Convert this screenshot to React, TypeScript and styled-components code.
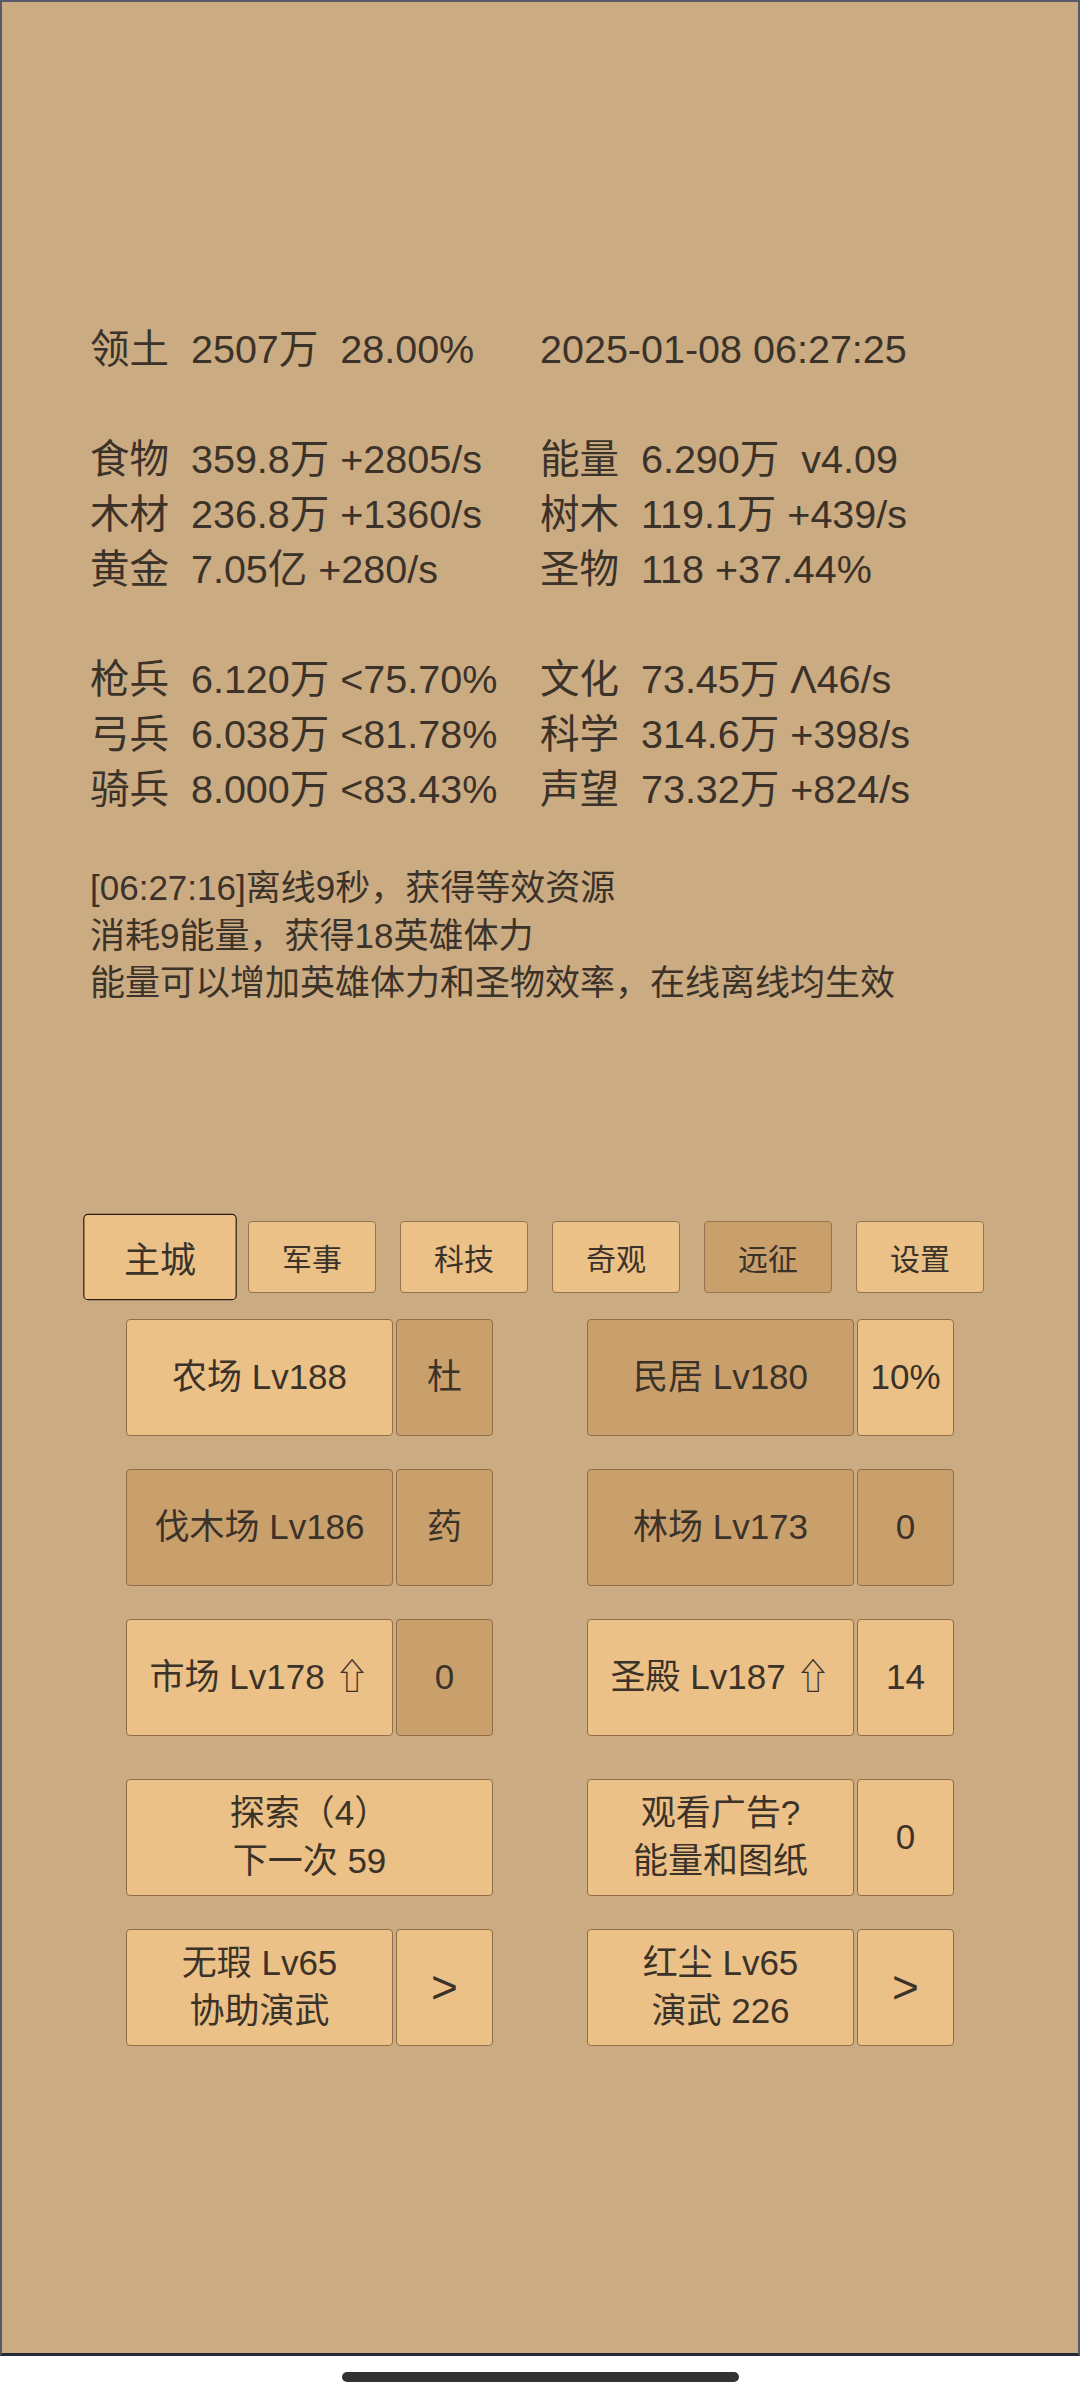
import styled, { createGlobalStyle } from 'styled-components';

const GlobalStyle = createGlobalStyle`
  html, body {
    margin: 0;
    padding: 0;
    background: #ffffff;
  }
  body {
    font-family: "Liberation Sans", "Noto Sans CJK SC", "DejaVu Sans", sans-serif;
    color: #3b3229;
  }
`;

type Tone = 'light' | 'dark';

type StatLine = [string, string] | null;

const statLines: StatLine[] = [
  ['领土  2507万  28.00%', '2025-01-08 06:27:25'],
  null,
  ['食物  359.8万 +2805/s', '能量  6.290万  v4.09'],
  ['木材  236.8万 +1360/s', '树木  119.1万 +439/s'],
  ['黄金  7.05亿 +280/s', '圣物  118 +37.44%'],
  null,
  ['枪兵  6.120万 <75.70%', '文化  73.45万 Λ46/s'],
  ['弓兵  6.038万 <81.78%', '科学  314.6万 +398/s'],
  ['骑兵  8.000万 <83.43%', '声望  73.32万 +824/s'],
];

const logLines = [
  '[06:27:16]离线9秒，获得等效资源',
  '消耗9能量，获得18英雄体力',
  '能量可以增加英雄体力和圣物效率，在线离线均生效',
];

const tabs: { name: string; tone: Tone; active?: boolean }[] = [
  { name: '主城', tone: 'light', active: true },
  { name: '军事', tone: 'light' },
  { name: '科技', tone: 'light' },
  { name: '奇观', tone: 'light' },
  { name: '远征', tone: 'dark' },
  { name: '设置', tone: 'light' },
];

type Cell = { text: string[]; tone: Tone; side?: { text: string; tone: Tone; big?: boolean } };

const buildingRows: { cells: Cell[]; extraTop?: boolean }[] = [
  {
    cells: [
      { text: ['农场 Lv188'], tone: 'light', side: { text: '杜', tone: 'dark' } },
      { text: ['民居 Lv180'], tone: 'dark', side: { text: '10%', tone: 'light' } },
    ],
  },
  {
    cells: [
      { text: ['伐木场 Lv186'], tone: 'dark', side: { text: '药', tone: 'dark' } },
      { text: ['林场 Lv173'], tone: 'dark', side: { text: '0', tone: 'dark' } },
    ],
  },
  {
    cells: [
      { text: ['市场 Lv178 ⇧'], tone: 'light', side: { text: '0', tone: 'dark' } },
      { text: ['圣殿 Lv187 ⇧'], tone: 'light', side: { text: '14', tone: 'light' } },
    ],
  },
  {
    extraTop: true,
    cells: [
      { text: ['探索（4）', '下一次 59'], tone: 'light' },
      { text: ['观看广告?', '能量和图纸'], tone: 'light', side: { text: '0', tone: 'light' } },
    ],
  },
  {
    cells: [
      { text: ['无瑕 Lv65', '协助演武'], tone: 'light', side: { text: '>', tone: 'light', big: true } },
      { text: ['红尘 Lv65', '演武 226'], tone: 'light', side: { text: '>', tone: 'light', big: true } },
    ],
  },
];

const Screen = styled.div`
  width: 1080px;
  height: 2400px;
  display: flex;
  flex-direction: column;
`;

const Panel = styled.div`
  height: 2356px;
  box-sizing: border-box;
  background: #cbab82;
  border: 2px solid #55596a;
  border-bottom: 3px solid #262a38;
  display: flex;
  flex-direction: column;
`;

const Stats = styled.div`
  margin-top: 320px;
  padding-left: 88px;
  font-size: 39.5px;
  line-height: 55px;
`;

const StatRow = styled.div`
  display: grid;
  grid-template-columns: 450px auto;
  height: 55px;
  white-space: pre;
`;

const Log = styled.div`
  margin-top: 47px;
  padding-left: 88px;
  font-size: 35px;
  line-height: 47.5px;
`;

const TabBar = styled.div`
  margin-top: 214px;
  display: flex;
  justify-content: center;
  gap: 24px;
`;

const Tab = styled.div<{ $tone: Tone; $active?: boolean }>`
  width: 128px;
  height: 72px;
  box-sizing: border-box;
  display: flex;
  align-items: center;
  justify-content: center;
  font-size: 30px;
  border-radius: 4px;
  border: 1px solid ${({ $active }) => ($active ? '#2c1e10' : '#95754f')};
  background: ${({ $tone }) => ($tone === 'light' ? '#ebc187' : '#c9a06c')};
  transform: ${({ $active }) => ($active ? 'scale(1.2)' : 'none')};
`;

const Buildings = styled.div`
  margin-top: 26px;
  display: flex;
  flex-direction: column;
`;

const BuildingRow = styled.div<{ $extraTop?: boolean }>`
  display: flex;
  justify-content: center;
  gap: 94px;
  margin-top: ${({ $extraTop }) => ($extraTop ? '43px' : '33px')};
  &:first-child {
    margin-top: 0;
  }
`;

const Pair = styled.div`
  width: 367px;
  display: flex;
  gap: 3px;
`;

const Btn = styled.div<{ $tone: Tone; $big?: boolean }>`
  height: 117px;
  box-sizing: border-box;
  display: flex;
  flex-direction: column;
  align-items: center;
  justify-content: center;
  text-align: center;
  font-size: ${({ $big }) => ($big ? '46px' : '35px')};
  line-height: 48px;
  border-radius: 4px;
  border: 1px solid #8f6e48;
  background: ${({ $tone }) => ($tone === 'light' ? '#ebc187' : '#c9a06c')};
  white-space: pre;
`;

const MainBtn = styled(Btn)`
  flex: 1;
`;

const SideBtn = styled(Btn)`
  width: 97px;
  flex: none;
`;

const HomeArea = styled.div`
  flex: 1;
  display: flex;
  justify-content: center;
  padding-top: 16px;
`;

const HomeBar = styled.div`
  width: 397px;
  height: 10px;
  border-radius: 5px;
  background: #333333;
`;

export default function App() {
  return (
    <Screen>
      <GlobalStyle />
      <Panel>
        <Stats>
          {statLines.map((line, i) => (
            <StatRow key={i}>
              {line ? (
                <>
                  <span>{line[0]}</span>
                  <span>{line[1]}</span>
                </>
              ) : null}
            </StatRow>
          ))}
        </Stats>
        <Log>
          {logLines.map((l) => (
            <div key={l}>{l}</div>
          ))}
        </Log>
        <TabBar>
          {tabs.map((t) => (
            <Tab key={t.name} $tone={t.tone} $active={t.active}>
              {t.name}
            </Tab>
          ))}
        </TabBar>
        <Buildings>
          {buildingRows.map((row, i) => (
            <BuildingRow key={i} $extraTop={row.extraTop}>
              {row.cells.map((cell, j) => (
                <Pair key={j}>
                  <MainBtn $tone={cell.tone}>
                    {cell.text.map((t) => (
                      <span key={t}>{t}</span>
                    ))}
                  </MainBtn>
                  {cell.side && (
                    <SideBtn $tone={cell.side.tone} $big={cell.side.big}>
                      {cell.side.text}
                    </SideBtn>
                  )}
                </Pair>
              ))}
            </BuildingRow>
          ))}
        </Buildings>
      </Panel>
      <HomeArea>
        <HomeBar />
      </HomeArea>
    </Screen>
  );
}
